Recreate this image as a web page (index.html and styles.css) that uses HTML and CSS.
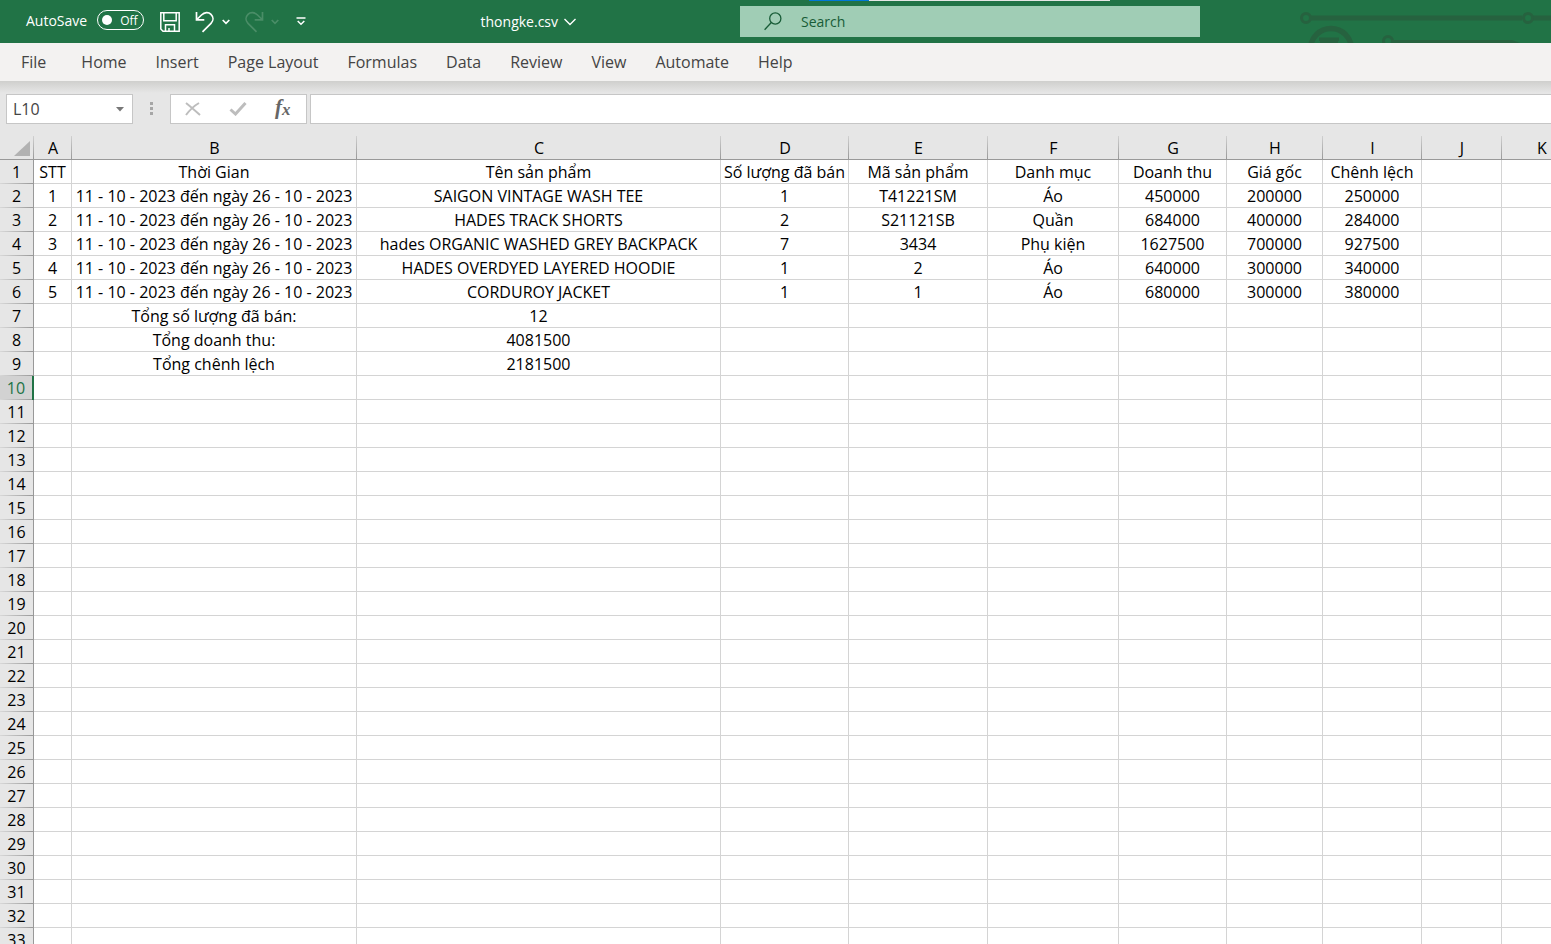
FILE: index.html
```html
<!DOCTYPE html>
<html lang="en">
<head>
<meta charset="utf-8">
<title>thongke.csv</title>
<link rel="stylesheet" href="styles.css">
</head>
<body>
<header class="titlebar">
  <svg class="circuit" width="251" height="43" viewBox="0 0 251 43" fill="none" stroke="#26623f" aria-hidden="true">
    <circle cx="6" cy="18" r="4.500" stroke-width="3"/>
    <path d="M11 18H222M233 18H251" stroke-width="5"/>
    <circle cx="228" cy="18" r="4.500" stroke-width="3"/>
    <circle cx="31" cy="49" r="20.500" stroke-width="5.500"/>
    <path d="M19 37.500H39V41H38V43H20V41H19Z" fill="#26623f" stroke="none"/>
    <circle cx="88" cy="41" r="4.500" stroke-width="3"/>
    <path d="M93 42.500H212" stroke-width="5"/>
    <path d="M212 40L220 43H212Z" fill="#26623f" stroke="none"/>
  </svg>
  <div class="progress" aria-hidden="true"></div>
  <div class="titlebar-left">
    <label class="autosave">AutoSave
      <button class="switch" type="button" role="switch" aria-checked="false"><span class="knob"></span>Off</button>
    </label>
    <button class="icon-btn save" type="button" aria-label="Save">
      <svg width="20" height="20" viewBox="0 0 20 20" fill="none" stroke="#fff" stroke-width="1.500"><path d="M.8.8H19.200V19.200H3L.8 17ZM3.800.8V8.800H16.200V.8M5.500 19V12.800H14.500V19M9 19V16"/></svg>
    </button>
    <button class="icon-btn undo" type="button" aria-label="Undo">
      <svg width="20" height="22" viewBox="0 0 20 22" fill="none" stroke="#fff" stroke-width="1.700"><path d="M1.500 1V8.800H9.300M1.800 8.500L6.500 4C9.500 1 13.500.8 16 3.300C18.600 5.900 18.600 9.700 16 12.300L7.500 20.800"/></svg>
    </button>
    <button class="icon-btn caret" type="button" aria-label="Undo options">
      <svg width="8" height="6" viewBox="0 0 8 6" fill="none" stroke="#fff" stroke-width="1.700"><path d="M.7 1L4 4.300L7.300 1"/></svg>
    </button>
    <button class="icon-btn redo" type="button" aria-label="Redo" disabled>
      <svg width="20" height="22" viewBox="0 0 20 22" fill="none" stroke="#4a8d67" stroke-width="1.700"><path d="M18.500 1V8.800H10.700M18.200 8.500L13.500 4C10.500 1 6.500.8 4 3.300C1.400 5.900 1.400 9.700 4 12.300L12.500 20.800"/></svg>
    </button>
    <button class="icon-btn caret" type="button" aria-label="Redo options" disabled>
      <svg width="8" height="6" viewBox="0 0 8 6" fill="none" stroke="#4a8d67" stroke-width="1.700"><path d="M.7 1L4 4.300L7.300 1"/></svg>
    </button>
    <button class="icon-btn customize" type="button" aria-label="Customize Quick Access Toolbar">
      <svg width="10" height="9" viewBox="0 0 10 9" fill="none" stroke="#fff" stroke-width="1.500"><path d="M.5 1H9.500M1.700 4L5 7.300L8.300 4"/></svg>
    </button>
    <button class="filename" type="button">thongke.csv
      <svg width="12" height="8" viewBox="0 0 12 8" fill="none" stroke="#fff" stroke-width="1.400"><path d="M.5 1L6 6.500L11.500 1"/></svg>
    </button>
  </div>
  <label class="search">
    <svg width="18" height="19" viewBox="0 0 18 19" fill="none" stroke="#185c37" stroke-width="1.300"><circle cx="11.300" cy="6.500" r="5.600"/><path d="M7.300 10.500L.6 17.800"/></svg>
    <input type="search" placeholder="Search" aria-label="Search">
  </label>
</header>
<nav class="tabs">
  <a class="file" href="#">File</a>
  <a href="#">Home</a>
  <a href="#">Insert</a>
  <a href="#">Page Layout</a>
  <a href="#">Formulas</a>
  <a href="#">Data</a>
  <a href="#">Review</a>
  <a href="#">View</a>
  <a href="#">Automate</a>
  <a href="#">Help</a>
</nav>
<section class="formula-row">
  <div class="namebox">
    <input type="text" value="L10" aria-label="Name Box">
    <button type="button" aria-label="Open Name Box">
      <svg width="8" height="5" viewBox="0 0 8 5"><path d="M0 0H8L4 4.500Z" fill="#777"/></svg>
    </button>
  </div>
  <svg class="grip" width="3" height="14" viewBox="0 0 3 14" fill="#a6a6a6" aria-hidden="true"><path d="M0 0H3V3H0ZM0 5H3V8H0ZM0 10H3V13H0Z"/></svg>
  <div class="actions">
    <button type="button" aria-label="Cancel"><svg width="16" height="14" viewBox="0 0 16 14" fill="none" stroke="#bdbdbd" stroke-width="2"><path d="M1 1Q6 5 15 13M14 1Q7 5 1 13"/></svg></button>
    <button type="button" aria-label="Enter"><svg width="18" height="14" viewBox="0 0 18 14" fill="none" stroke="#bdbdbd" stroke-width="3"><path d="M1.500 7.500L6.500 12L16.500 1"/></svg></button>
    <button class="fx" type="button" aria-label="Insert Function">f<span>x</span></button>
  </div>
  <input class="formula" type="text" aria-label="Formula Bar">
</section>
<main class="sheet">
  <table class="grid">
    <colgroup>
      <col class="w-head"><col class="w-a"><col class="w-b"><col class="w-c"><col class="w-d"><col class="w-e"><col class="w-f"><col class="w-g"><col class="w-h"><col class="w-i"><col class="w-j"><col class="w-j">
    </colgroup>
    <thead>
      <tr>
        <th class="corner"><svg width="16" height="15" viewBox="0 0 16 15" aria-hidden="true"><path d="M16 0V15H0Z" fill="#b2b2b2"/></svg></th>
        <th>A</th><th>B</th><th>C</th><th>D</th><th>E</th><th>F</th><th>G</th><th>H</th><th>I</th><th>J</th><th>K</th>
      </tr>
    </thead>
    <tbody id="rows"></tbody>
  </table>
</main>
<script src="sheet.js"></script>
</body>
</html>
```

FILE: styles.css
```css
* { box-sizing: border-box; }

body {
  margin: 0;
  height: 100vh;
  display: flex;
  flex-direction: column;
  overflow: hidden;
  background: #e6e6e6;
  font-family: "Open Sans", "Noto Sans", sans-serif;
  color: #000;
}

button, input { font: inherit; color: inherit; }
button { background: none; border: 0; padding: 0; display: flex; align-items: center; }
svg { display: block; flex: none; }

.titlebar {
  position: relative;
  flex: none;
  height: 43px;
  display: grid;
  grid-template-columns: minmax(0, 1fr) 460px 351px;
  background: #217346;
  color: #fff;
  font-size: 14px;
}
.circuit { position: absolute; right: 0; top: 0; }
.progress {
  position: absolute;
  top: 0;
  right: 441px;
  width: 301px;
  height: 1px;
  background: linear-gradient(90deg, #0078d7 60px, #e6e6e6 60px);
}

.titlebar-left { display: flex; align-items: center; padding-left: 26px; }
.autosave { display: flex; align-items: center; gap: 10px; padding-bottom: 3px; }
.switch {
  width: 47px;
  height: 20px;
  border: 1px solid #fff;
  border-radius: 10px;
  padding-left: 4px;
  gap: 8px;
  font-size: 12px;
}
.knob { width: 10px; height: 10px; border-radius: 50%; background: #fff; }
.save { margin-left: 16px; }
.undo { margin-left: 15px; }
.redo { margin-left: 14px; }
.caret { margin-left: 7px; }
.customize { margin-left: 17px; }
.filename { margin-left: auto; margin-right: 164px; gap: 6px; }

.search {
  display: flex;
  align-items: center;
  gap: 19px;
  margin: 6px 0;
  padding-left: 24px;
  background: #a0cdb5;
  color: #185c37;
}
.search input { flex: 1; min-width: 0; border: 0; padding: 0; background: none; outline: 0; }
.search input::placeholder { color: #185c37; opacity: 1; }

.tabs {
  flex: none;
  height: 38px;
  display: flex;
  align-items: center;
  gap: 29px;
  padding-left: 21px;
  background: #f3f2f1;
  font-size: 16px;
}
.tabs a { color: #444; text-decoration: none; white-space: nowrap; }
.tabs .file { margin-right: 6px; }

.formula-row {
  flex: none;
  display: flex;
  align-items: center;
  height: 55px;
  padding: 13px 0 12px 6px;
  background: linear-gradient(#cfcfcd, #e6e6e6 12px);
}
.namebox, .actions, .formula { height: 30px; border: 1px solid #c6c6c6; background: #fff; }
.namebox { width: 127px; display: flex; align-items: center; padding: 0 8px 0 6px; }
.namebox input { flex: 1; min-width: 0; border: 0; padding: 0; outline: 0; font-size: 16px; color: #444; }
.grip { margin: 0 17px; }
.actions { width: 137px; display: flex; align-items: center; gap: 28px; padding-left: 14px; }
.fx { font: italic bold 21px "Liberation Serif", serif; color: #666; padding-bottom: 3px; }
.fx span { font-size: 17px; padding-top: 4px; }
.formula { flex: 1; min-width: 0; margin-left: 3px; border-right: 0; outline: 0; padding: 0 6px; }

.sheet { flex: 1; min-height: 0; overflow: hidden; background: #fff; }
.grid { table-layout: fixed; width: 1582px; border-collapse: separate; border-spacing: 0; font-size: 16px; }
.w-head { width: 34px; }
.w-a { width: 38px; }
.w-b { width: 285px; }
.w-c { width: 364px; }
.w-d { width: 128px; }
.w-e { width: 139px; }
.w-f { width: 131px; }
.w-g { width: 108px; }
.w-h { width: 96px; }
.w-i { width: 99px; }
.w-j { width: 80px; }

.grid th, .grid td {
  height: 24px;
  padding: 2px 0 0;
  line-height: 21px;
  text-align: center;
  white-space: nowrap;
  font-weight: normal;
  border-right: 1px solid #d4d4d4;
  border-bottom: 1px solid #d4d4d4;
}
.grid th { background: #e6e6e6; }
.grid thead th {
  border-right: 0;
  border-bottom-color: #999;
  background: linear-gradient(#d0d0d0, #999) right / 1px 100% no-repeat #e6e6e6;
}
.grid tbody th {
  padding: 0;
  line-height: 23px;
  border-right-color: #999;
  border-bottom: 0;
  background: linear-gradient(90deg, #d8d8d8, #999) bottom / 100% 1px no-repeat #e6e6e6;
}
.grid .corner svg { margin-left: 14px; }
.grid tbody .active {
  border-right: 2px solid #217346;
  background-color: #d2d2d2;
  color: #217346;
}
```

FILE: sheet.js
```js
const COLUMNS = 11;
const ROWS = 33;
const ACTIVE_ROW = 10;
const PERIOD = "11 - 10 - 2023 đến ngày 26 - 10 - 2023";

const data = [
  ["STT", "Thời Gian", "Tên sản phẩm", "Số lượng đã bán", "Mã sản phẩm", "Danh mục", "Doanh thu", "Giá gốc", "Chênh lệch"],
  ["1", PERIOD, "SAIGON VINTAGE WASH TEE", "1", "T41221SM", "Áo", "450000", "200000", "250000"],
  ["2", PERIOD, "HADES TRACK SHORTS", "2", "S21121SB", "Quần", "684000", "400000", "284000"],
  ["3", PERIOD, "hades ORGANIC WASHED GREY BACKPACK", "7", "3434", "Phụ kiện", "1627500", "700000", "927500"],
  ["4", PERIOD, "HADES OVERDYED LAYERED HOODIE", "1", "2", "Áo", "640000", "300000", "340000"],
  ["5", PERIOD, "CORDUROY JACKET", "1", "1", "Áo", "680000", "300000", "380000"],
  ["", "Tổng số lượng đã bán:", "12"],
  ["", "Tổng doanh thu:", "4081500"],
  ["", "Tổng chênh lệch", "2181500"]
];

const body = document.getElementById("rows");
for (let r = 1; r <= ROWS; r++) {
  const row = body.insertRow();
  const head = document.createElement("th");
  head.textContent = r;
  if (r === ACTIVE_ROW) head.className = "active";
  row.append(head);
  for (let c = 0; c < COLUMNS; c++) {
    row.insertCell().textContent = (data[r - 1] || [])[c] || "";
  }
}
```
